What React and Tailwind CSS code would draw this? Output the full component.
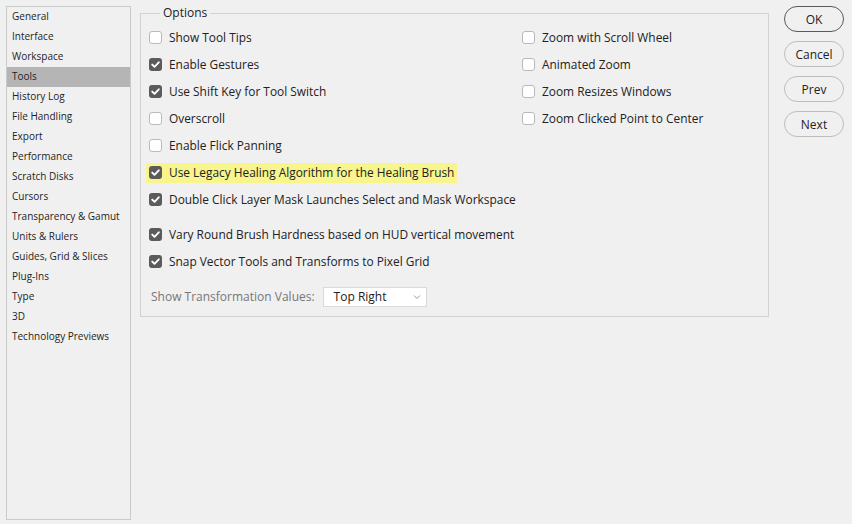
import React from "react";

const sidebar = [
  "General",
  "Interface",
  "Workspace",
  "Tools",
  "History Log",
  "File Handling",
  "Export",
  "Performance",
  "Scratch Disks",
  "Cursors",
  "Transparency & Gamut",
  "Units & Rulers",
  "Guides, Grid & Slices",
  "Plug-Ins",
  "Type",
  "3D",
  "Technology Previews",
];

function Box({ checked }) {
  if (checked) {
    return (
      <span className="flex h-[13px] w-[13px] shrink-0 items-center justify-center rounded-[3px] bg-[#5b5b5b]">
        <svg width="13" height="13" viewBox="0 0 13 13">
          <polyline points="3.2,6.6 5.5,8.8 9.8,4.3" fill="none" stroke="#ffffff" strokeWidth="1.9" strokeLinecap="round" strokeLinejoin="round" />
        </svg>
      </span>
    );
  }
  return <span className="h-[13px] w-[13px] shrink-0 rounded-[3px] border border-[#b9b9b9] bg-white" />;
}

function Row({ checked, label, highlight }) {
  return (
    <div className="flex h-[27px] items-center">
      <div className={"flex h-[20px] items-center gap-[7px] pr-[3px] " + (highlight ? "-ml-[3px] pl-[3px] bg-[#f7f58c]" : "")}>
        <Box checked={checked} />
        <span className="whitespace-nowrap text-[11.9px] text-[#222]">{label}</span>
      </div>
    </div>
  );
}

function Btn({ children, primary }) {
  return (
    <button
      className={
        "flex h-[26px] w-[60px] items-center justify-center rounded-full bg-[#f0f0f0] pt-[1px] text-[12px] text-[#222] " +
        (primary ? "border border-[#5a5a5a]" : "border border-[#bdbdbd]")
      }
    >
      {children}
    </button>
  );
}

export default function App() {
  return (
    <div
      className="flex h-[524px] w-[852px] bg-[#f0f0f0] p-[6px]"
      style={{ fontFamily: '"Open Sans", "Noto Sans", sans-serif' }}
    >
      <div className="h-[514px] w-[125px] shrink-0 border border-[#cacaca]">
        {sidebar.map((s) => (
          <div
            key={s}
            className={
              "flex h-[20px] items-center pb-[2px] pl-[5px] text-[10px] text-[#1e1e1e] " +
              (s === "Tools" ? "bg-[#b5b5b5]" : "")
            }
          >
            {s}
          </div>
        ))}
      </div>

      <div className="relative ml-[9px] mt-[7px] h-[304px] w-[629px] shrink-0 border border-[#d2d2d2] pl-[8px] pt-[10px]">
        <span className="absolute left-[19px] top-[-10px] bg-[#f0f0f0] px-[3px] text-[12px] leading-[18px] text-[#222]">
          Options
        </span>
        <div className="flex">
          <div className="flex w-[373px] flex-col">
            <Row label="Show Tool Tips" />
            <Row checked label="Enable Gestures" />
            <Row checked label="Use Shift Key for Tool Switch" />
            <Row label="Overscroll" />
          </div>
          <div className="flex flex-col">
            <Row label="Zoom with Scroll Wheel" />
            <Row label="Animated Zoom" />
            <Row label="Zoom Resizes Windows" />
            <Row label="Zoom Clicked Point to Center" />
          </div>
        </div>
        <Row label="Enable Flick Panning" />
        <Row checked highlight label="Use Legacy Healing Algorithm for the Healing Brush" />
        <Row checked label="Double Click Layer Mask Launches Select and Mask Workspace" />
        <div className="h-[8px]" />
        <Row checked label="Vary Round Brush Hardness based on HUD vertical movement" />
        <Row checked label="Snap Vector Tools and Transforms to Pixel Grid" />
        <div className="mt-[12px] flex items-center gap-[8px] pl-[2px]">
          <span className="text-[12px] text-[#777]">Show Transformation Values:</span>
          <div className="flex h-[20px] w-[104px] items-center justify-between border border-[#dadada] bg-white pl-[10px] pr-[5px]">
            <span className="text-[12px] text-[#222]">Top Right</span>
            <svg width="8" height="6" viewBox="0 0 8 6">
              <polyline points="1,1.5 4,4.5 7,1.5" fill="none" stroke="#9a9a9a" strokeWidth="1" />
            </svg>
          </div>
        </div>
      </div>

      <div className="ml-[15px] flex flex-col gap-[9px]">
        <Btn primary>OK</Btn>
        <Btn>Cancel</Btn>
        <Btn>Prev</Btn>
        <Btn>Next</Btn>
      </div>
    </div>
  );
}
